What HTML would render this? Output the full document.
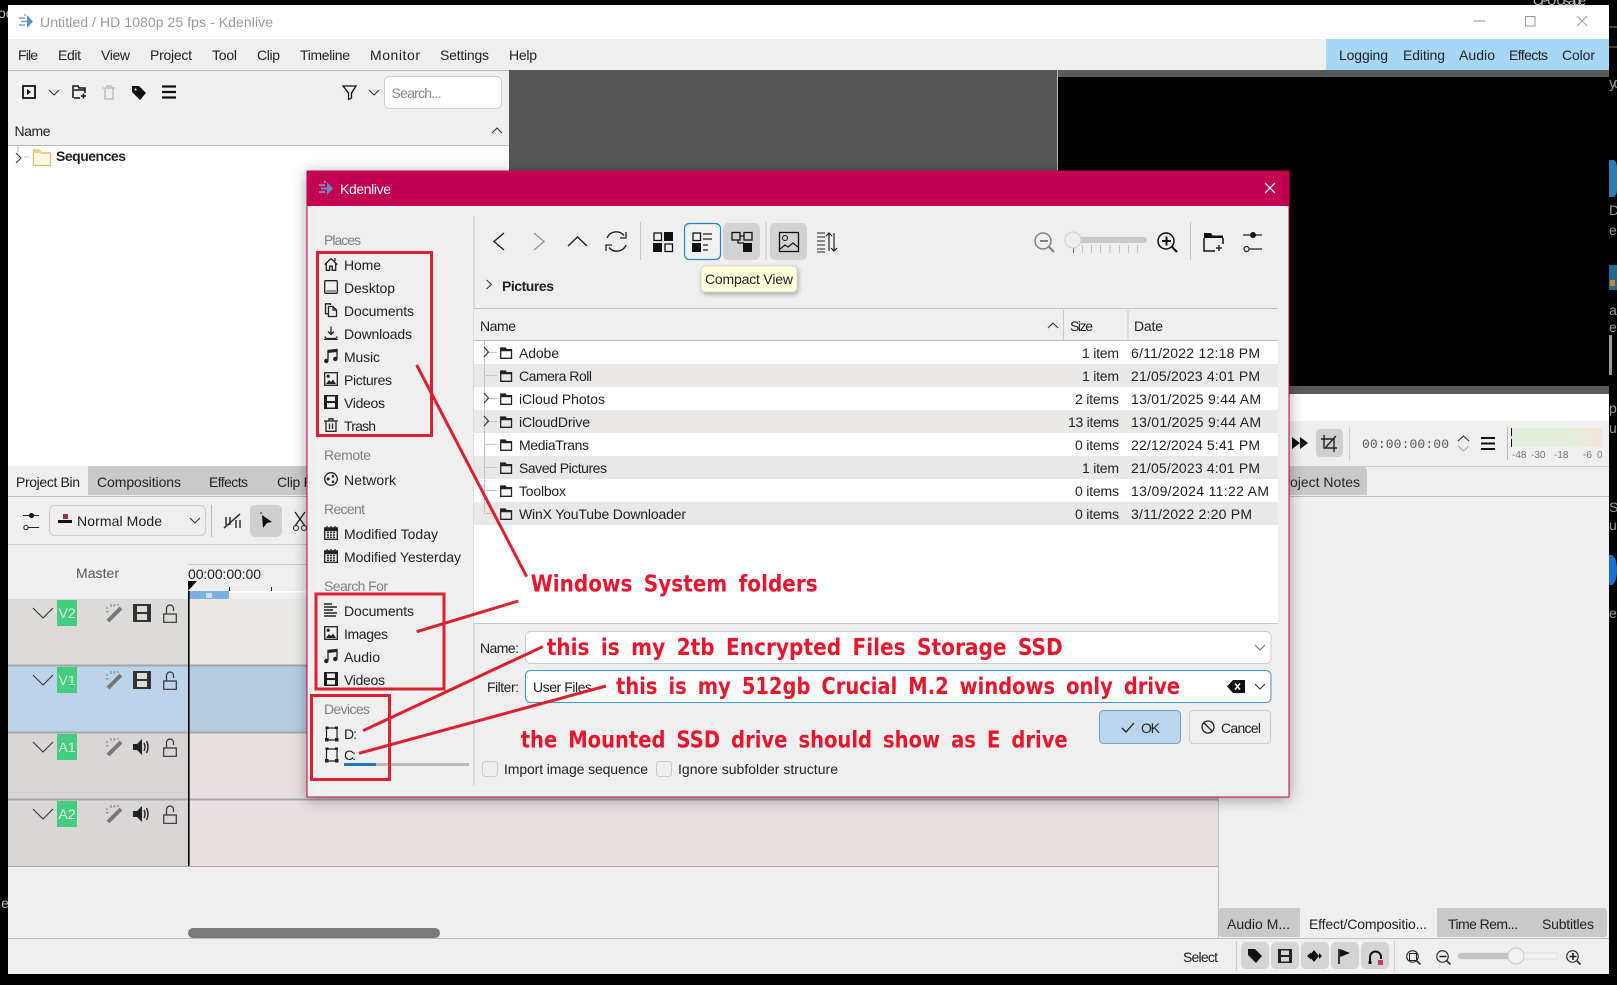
<!DOCTYPE html>
<html><head><meta charset="utf-8"><title>Kdenlive</title>
<style>
html,body{margin:0;padding:0;background:#000;overflow:hidden}
svg{display:block}
text{font-family:"Liberation Sans",sans-serif;font-size:14px;fill:#222}
.h{fill:#808080}
.ann{font-family:"DejaVu Sans",sans-serif;font-weight:bold;font-size:23px;fill:#e8152d;word-spacing:5px}
.ic{fill:none;stroke:#222;stroke-width:1.3}
.ch{fill:none;stroke:#333;stroke-width:1.1}
.blk{fill:none;stroke:#000;stroke-width:1.6}
</style></head>
<body>
<svg width="1617" height="985" viewBox="0 0 1617 985" xmlns="http://www.w3.org/2000/svg">
<defs>
<g id="fold"><path d="M.7 11.3V1h4.6l1 1.6h5.2v8.7z" fill="none" stroke="#222" stroke-width="1.3"/><path d="M.7 1h4.6l1 2h5.2v1.2H.7z" fill="#222"/></g>
<g id="home"><path class="ic" d="M7 1.5L.7 7.6M7 1.5l6.3 6.1M2.3 6.5v6.8h3.4V9.2h2.6v4.1h3.4V6.5M11 1v3"/></g>
<g id="desk"><rect class="ic" x=".7" y=".7" width="12.6" height="12.6" rx="1"/><rect x="2" y="10" width="10" height="2" fill="#999"/></g>
<g id="docs"><path class="ic" d="M6.5 2V.8H1.5v10h3M4.5 3.5h4.5l3.5 3.5v6.5h-8zM9 3.5V7h3.5"/></g>
<g id="dl"><path class="ic" d="M7 .5v8M4 5.5l3 3 3-3M.7 10.5l1.5 2h9.6l1.5-2"/><path d="M0 13.4h14" stroke="#222" stroke-width="1.2"/></g>
<g id="music"><path class="ic" d="M4 11.5V1.5l9-1v9"/><path d="M4 1.5l9-1v2.5l-9 1z" fill="#222"/><circle cx="2.3" cy="12" r="2.2" fill="#222"/><circle cx="11.3" cy="10" r="2.2" fill="#222"/></g>
<g id="pics"><rect class="ic" x=".7" y=".7" width="12.6" height="12.6"/><circle cx="4.2" cy="4.2" r="1.6" fill="#222"/><path d="M2 12l3-4 2 2 2-2.500 3 4.500z" fill="#222"/></g>
<g id="vids"><rect x="0" y="0" width="14" height="14" fill="#1c1c1c"/><rect x="3" y="1.500" width="8" height="4.500" fill="#efefef"/><rect x="3" y="8" width="8" height="4.500" fill="#efefef"/></g>
<g id="trash"><path class="ic" d="M2 3h10v10.300H2zM0 3h14M5 3V.8h4V3M5.500 5.500v5.500M8.500 5.500v5.500"/></g>
<g id="net"><circle class="ic" cx="7" cy="7" r="6.300"/><circle cx="4.200" cy="7" r="1.500" fill="#222"/><circle cx="9" cy="4.200" r="1.300" fill="#222"/><circle cx="9" cy="9.800" r="1.300" fill="#222"/></g>
<g id="cal"><rect class="ic" x=".7" y="2" width="12.600" height="11.300"/><path d="M.7 2h12.600v2.500H.7zM3 0v3M7 0v3M11 0v3" stroke="#222" stroke-width="1.200" fill="#222"/><path d="M3 6.500h2M6 6.500h2M9 6.500h2M3 9h2M6 9h2M9 9h2M3 11.300h2M6 11.300h2M9 11.300h2" stroke="#222" stroke-width="1.400"/></g>
<g id="docl"><path d="M0 1h8M0 4h13M0 7h9M0 10h13M0 13h12" stroke="#222" stroke-width="1.500"/></g>
<g id="drive"><rect fill="none" stroke="#222" stroke-width="1.200" x="1.500" y="1" width="10.500" height="12" rx="1"/><path d="M0 11h3.500v3.500H0zM10 11h3.500v3.500H10zM.5-.5h3v2.500h-3zM10 -.5h3V2h-3z" fill="#222"/></g>
<g id="wand"><path d="M3 17L16 4" stroke="#777" stroke-width="4"/><path d="M1.500 3l.8 2M6 0v3M10 0l-1.200 2.500M1 8l2.500-.5M13 0v2" stroke="#888" stroke-width="1.200"/></g>
<g id="film"><rect width="18" height="18" fill="#333"/><rect x="4" y="2" width="10" height="6" fill="#dcdbd8"/><rect x="4" y="10" width="10" height="6" fill="#dcdbd8"/></g>
<g id="lock"><path d="M.7 10h12.600v8.300H.7zM3.500 10V4.500a3.500 3.500 0 0 1 7 0V7" fill="none" stroke="#333" stroke-width="1.200"/></g>
<g id="spk"><path d="M0 6h4l5-5v16l-5-5H0z" fill="#222"/><path d="M11 5q2 4 0 8M13.500 3q3 6 0 12" fill="none" stroke="#222" stroke-width="1.400"/></g>
<g id="mag"><circle cx="9" cy="9" r="8" fill="none" stroke="currentColor" stroke-width="1.500"/><path d="M15 15l5 5" stroke="currentColor" stroke-width="2.200"/></g>
<g id="set"><path d="M0 3h19M2 17h17" stroke="#222" stroke-width="1.200"/><circle cx="10" cy="3" r="3" fill="#111"/><circle cx="3.500" cy="17" r="2.500" fill="#efefef" stroke="#222" stroke-width="1.200"/></g>
<g id="nf"><path d="M1 19V1h7l1.500 2.500H20V6H1z" fill="#111"/><path d="M1 6v13h11M20 6v6" fill="none" stroke="#111" stroke-width="1.500"/><path d="M13 16h6M16 13v6" stroke="#111" stroke-width="1.300"/></g>
<g id="chd"><path d="M0 0l5 5 5-5" class="ch"/></g>
<g id="kd"><path d="M0 4h6M2 7.500h6M0 11h6" stroke="#7aa2d8" stroke-width="1.600"/><path d="M8 1l6 6.500-6 6.500z" fill="#5a8fd0"/><circle cx="6" cy="1" r="1" fill="#d98"/></g>
</defs>

<!-- outside bg strays -->
<rect width="1617" height="985" fill="#000"/>
<text x="1533" y="5" style="font-size:13px;fill:#bbb" textLength="53">CPU Usage</text>
<text x="-2" y="18" style="fill:#bbb">oc</text>
<text x="-9" y="908" style="fill:#bbb">Re</text>
<g style="fill:#aaa">
<text x="1609" y="88" style="fill:#999;font-size:15px;letter-spacing:-3px">yc</text>
<text x="1609" y="215" style="fill:#999">Di</text>
<text x="1609" y="235" style="fill:#999">e</text>
<text x="1609" y="315" style="fill:#999">al</text>
<text x="1609" y="332" style="fill:#999">e.</text>
<text x="1609" y="413" style="fill:#999">pe</text>
<text x="1609" y="433" style="fill:#999">ut</text>
<text x="1609" y="512" style="fill:#999">Sp</text>
<text x="1609" y="530" style="fill:#999">ut</text>
<text x="1609" y="618" style="fill:#999">e</text>
</g>
<path d="M1609 27h8M1609 47h8" stroke="#a87a30"/>
<path d="M1609 160h5q3 2 3 8v22q0 5-3 7h-5z" fill="#2a7fb0"/>
<path d="M1609 265h8v25h-8z" fill="#1f6a8a"/><rect x="1610" y="280" width="5" height="6" fill="#c08a30"/>
<path d="M1609 555h3q5 3 5 15t-5 15h-3z" fill="#1c6fd0"/>
<rect x="1609" y="335" width="3" height="40" fill="#999"/>

<!-- window -->
<rect x="8" y="5" width="1601" height="969" fill="#efefef"/>
<rect x="8" y="5" width="1601" height="34" fill="#fff"/>
<use href="#kd" x="19" y="14"/>
<text x="40" y="27" style="fill:#999" textLength="233">Untitled / HD 1080p 25 fps - Kdenlive</text>
<path d="M1474 21h11" stroke="#999"/><rect x="1525.500" y="16.500" width="9.500" height="9.500" fill="none" stroke="#999"/><path d="M1577 16l10 10M1587 16l-10 10" stroke="#999"/>

<!-- menu -->
<rect x="8" y="70" width="1601" height="1" fill="#bbb"/>
<text x="18" y="60" textLength="20">File</text><text x="58" y="60" textLength="23">Edit</text><text x="101" y="60" textLength="29">View</text><text x="150" y="60" textLength="42">Project</text><text x="212" y="60" textLength="25">Tool</text><text x="257" y="60" textLength="23">Clip</text><text x="300" y="60" textLength="50">Timeline</text><text x="370" y="60" textLength="50">Monitor</text><text x="440" y="60" textLength="49">Settings</text><text x="509" y="60" textLength="28">Help</text>
<rect x="1326" y="39" width="283" height="31" fill="#a6d6f8"/>
<text x="1339" y="60" textLength="49">Logging</text><text x="1403" y="60" textLength="42">Editing</text><text x="1459" y="60" textLength="36">Audio</text><text x="1509" y="60" textLength="39">Effects</text><text x="1562" y="60" textLength="33">Color</text>

<!-- dark monitor areas -->
<rect x="509" y="70" width="548" height="400" fill="#565656"/>
<rect x="1057" y="70" width="1" height="110" fill="#bbb"/>
<rect x="1058" y="70" width="551" height="324" fill="#5a5a5a"/>
<rect x="1058" y="77" width="551" height="309" fill="#000"/>
<rect x="1058" y="394" width="551" height="27" fill="#fff"/>

<!-- bin panel -->
<rect x="8" y="71" width="501" height="75" fill="#efefef"/>
<rect x="8" y="146" width="501" height="320" fill="#fff"/>
<rect x="8" y="145" width="501" height="1" fill="#bbb"/>
<rect x="23" y="86" width="12" height="12" fill="none" stroke="#111" stroke-width="1.800"/><path d="M27 89l4 3-4 3z" fill="#111"/>
<use href="#chd" x="49" y="90"/>
<path d="M73 98V86h5l1 2h6v2H74M85 90v3M74 98h6M81 96h5M83.500 93.500v5" fill="none" stroke="#111" stroke-width="1.500"/>
<path d="M103 88h12M105 88v11h8V88M107 88v-2h4v2" fill="none" stroke="#bdbdbd" stroke-width="1.500"/>
<path d="M132 86h7l7 7-6 7-8-8z" fill="#111"/><circle cx="135.500" cy="89.500" r="1" fill="#fff"/>
<path d="M162 86.500h14M162 92h14M162 97.500h14" stroke="#111" stroke-width="2.200"/>
<path d="M343 86h13l-4.500 7v5l-3 1.500V93z" fill="none" stroke="#111" stroke-width="1.300"/>
<use href="#chd" x="369" y="90"/>
<rect x="384.500" y="76.500" width="117" height="32" rx="5" fill="#fff" stroke="#ccc"/>
<text x="391.500" y="98" style="fill:#888" textLength="50">Search...</text>
<text x="14.500" y="136" textLength="36">Name</text>
<path d="M492 133l5-5 5 5" class="ch"/>
<path d="M16 153l5 5-5 5" class="ch"/><path d="M24 157h5M18 146v6" stroke="#bbb"/>
<path d="M33.500 165.500V150h6l2 3h9v12.500z" fill="#fff9e6" stroke="#f0b860" stroke-width="1.200"/><path d="M33.500 153h17v-1h-9l-2-2h-6z" fill="#f7cf85"/>
<text x="56" y="161" style="font-weight:bold" textLength="70">Sequences</text>

<!-- tabs left -->
<rect x="88" y="466" width="225" height="29" fill="#c9c9c9"/>
<rect x="8" y="466" width="80" height="30" fill="#efefef"/>
<rect x="8" y="496" width="305" height="1" fill="#bbb"/>
<text x="16" y="487" textLength="64">Project Bin</text><text x="97" y="487" textLength="84">Compositions</text><text x="209" y="487" textLength="39">Effects</text><text x="277" y="487" textLength="36">Clip P</text>

<!-- timeline toolbar -->
<use href="#set" transform="translate(23 513) scale(.85 .85)"/>
<rect x="49.500" y="505.500" width="156" height="30" rx="5" fill="#efefef" stroke="#ccc"/>
<rect x="63" y="514" width="5" height="5" fill="#a03060"/><rect x="58" y="520" width="14" height="3" fill="#111"/>
<text x="77" y="526" textLength="85">Normal Mode</text>
<use href="#chd" x="190" y="518"/>
<rect x="211" y="505" width="1" height="32" fill="#bbb"/>
<path d="M224 528l16-14M226 517v8M230 517v8M236 520v8M240 520v8" stroke="#333" stroke-width="1.500"/>
<rect x="250" y="505" width="32" height="32" rx="5" fill="#cfcfcf"/>
<path d="M262 515l10 7-5 1-4 5z" fill="#111"/><circle cx="261" cy="513" r=".8" fill="#111"/>
<path d="M295 512l10 14M305 512l-10 14" stroke="#222" stroke-width="1.300"/><circle cx="296" cy="528" r="2.500" fill="none" stroke="#222"/><circle cx="304" cy="528" r="2.500" fill="none" stroke="#222"/>
<rect x="8" y="544" width="305" height="1" fill="#ccc"/>
<text x="76" y="578" style="fill:#555" textLength="43">Master</text>
<rect x="188" y="564" width="125" height="1" fill="#ccc"/>
<text x="188" y="579" textLength="73">00:00:00:00</text>

<!-- tracks -->
<rect x="8" y="599" width="180" height="67" fill="#dcdbd8"/><rect x="188" y="599" width="1030" height="67" fill="#e9e8e4"/>
<rect x="8" y="666" width="180" height="67" fill="#bcd4ea"/><rect x="188" y="666" width="1030" height="67" fill="#b5cde0"/>
<rect x="8" y="733" width="180" height="67" fill="#dad6d5"/><rect x="188" y="733" width="1030" height="67" fill="#e8e0e0"/>
<rect x="8" y="800" width="180" height="66" fill="#dad6d5"/><rect x="188" y="800" width="1030" height="66" fill="#e8e0e0"/>
<path d="M8 665.500h1210M8 732.500h1210M8 799.500h1210" stroke="#a3a5a7" stroke-width="2"/>
<path d="M8 866.500h1210" stroke="#aaa"/>
<rect x="1218" y="497" width="1" height="441" fill="#bbb"/>
<rect x="188" y="591" width="125" height="1.500" fill="#fff"/><rect x="189" y="591" width="40" height="8" fill="#7cb0e0"/><rect x="206" y="593" width="6" height="5" fill="#c9def0"/>
<path d="M229.500 587v4M271.500 587v4" stroke="#222"/>
<path d="M188 581h9l-9 10z" fill="#000"/>
<rect x="188" y="591" width="1.600" height="275" fill="#000"/>

<g id="hdrs">
<path d="M33 608l10 10 10-10" class="ch"/><rect x="57" y="600" width="20" height="26" fill="#45cd7f"/><text x="58.500" y="618" style="fill:#dff5e6;font-size:14px">V2</text><use href="#wand" x="105" y="604"/><use href="#film" x="133" y="604"/><use href="#lock" x="163" y="604"/>
<path d="M33 675l10 10 10-10" class="ch"/><rect x="57" y="667" width="20" height="26" fill="#45cd7f"/><text x="58.500" y="685" style="fill:#dff5e6;font-size:14px">V1</text><use href="#wand" x="105" y="671"/><use href="#film" x="133" y="671"/><use href="#lock" x="163" y="671"/>
<path d="M33 742l10 10 10-10" class="ch"/><rect x="57" y="734" width="20" height="26" fill="#45cd7f"/><text x="58.500" y="752" style="fill:#dff5e6;font-size:14px">A1</text><use href="#wand" x="105" y="738"/><use href="#spk" x="133" y="738"/><use href="#lock" x="163" y="738"/>
<path d="M33 809l10 10 10-10" class="ch"/><rect x="57" y="801" width="20" height="26" fill="#45cd7f"/><text x="58.500" y="819" style="fill:#dff5e6;font-size:14px">A2</text><use href="#wand" x="105" y="805"/><use href="#spk" x="133" y="805"/><use href="#lock" x="163" y="805"/>
</g>

<!-- scrollbar -->
<rect x="188" y="928" width="252" height="10" rx="5" fill="#7a7a7a"/>
<rect x="8" y="938" width="1601" height="1" fill="#bbb"/>

<!-- monitor controls right -->
<rect x="1219" y="421" width="390" height="76" fill="#efefef"/>
<path d="M1292 437l8 6-8 6zM1300 437l8 6-8 6z" fill="#111"/>
<rect x="1316" y="429" width="27" height="28" rx="4" fill="#cfcfcf"/>
<path d="M1324 435v13h13M1321 439h13v13M1336 436l-10 11" fill="none" stroke="#222" stroke-width="1.400"/>
<rect x="1349" y="427" width="1" height="33" fill="#ccc"/>
<text x="1362" y="448" style="fill:#555;font-family:'Liberation Mono',monospace;font-size:13px" textLength="87">00:00:00:00</text>
<path d="M1458 441l5.500-5 5.500 5" class="ch"/><path d="M1458 446l5.500 5 5.500-5" class="ch" style="stroke:#aaa"/>
<path d="M1481 438h14M1481 443.500h14M1481 449h14" stroke="#111" stroke-width="2"/>
<rect x="1507" y="427" width="1" height="33" fill="#bbb"/>
<defs><linearGradient id="mt" x1="0" x2="1" y1="0" y2="0"><stop offset="0" stop-color="#e2efdf"/><stop offset=".7" stop-color="#e6eedd"/><stop offset=".85" stop-color="#efeadc"/><stop offset="1" stop-color="#f3e3de"/></linearGradient></defs>
<rect x="1511" y="428" width="91" height="19" fill="url(#mt)"/>
<path d="M1511.500 428v8M1511.500 439v8" stroke="#111"/>
<g style="font-size:10px"><text x="1512" y="458" style="fill:#777;font-size:10px">-48</text><text x="1531" y="458" style="fill:#777;font-size:10px">-30</text><text x="1554" y="458" style="fill:#777;font-size:10px">-18</text><text x="1583" y="458" style="fill:#777;font-size:10px">-6</text><text x="1597" y="458" style="fill:#777;font-size:10px">0</text></g>
<rect x="1219" y="466" width="390" height="1" fill="#ccc"/>
<path d="M1270 467h93q4 0 4 4v24h-97z" fill="#c9c9c9"/>
<text x="1276" y="487" textLength="84">Project Notes</text>
<rect x="1219" y="496" width="390" height="1" fill="#bbb"/>

<!-- bottom tabs -->
<rect x="1219" y="908" width="388" height="29" rx="3" fill="#c9c9c9"/>
<rect x="1300" y="908" width="137" height="30" fill="#efefef"/>
<text x="1227" y="929" textLength="63">Audio M...</text><text x="1309" y="929" textLength="118">Effect/Compositio...</text><text x="1448" y="929" textLength="70">Time Rem...</text><text x="1542" y="929" textLength="52">Subtitles</text>

<!-- status bar -->
<text x="1183" y="962" textLength="35">Select</text>
<rect x="1236" y="941" width="1" height="30" fill="#ccc"/>
<rect x="1241" y="942" width="28" height="27" rx="5" fill="#d4d4d4"/><rect x="1271" y="942" width="28" height="27" rx="5" fill="#d4d4d4"/><rect x="1301" y="942" width="28" height="27" rx="5" fill="#d4d4d4"/><rect x="1331" y="942" width="28" height="27" rx="5" fill="#d4d4d4"/><rect x="1361" y="942" width="28" height="27" rx="5" fill="#d4d4d4"/>
<path d="M1248 949h7l7 7-6 7-8-8z" fill="#111"/>
<rect x="1278" y="949" width="14" height="14" fill="#222"/><rect x="1281" y="950.500" width="8" height="4.500" fill="#d4d4d4"/><rect x="1281" y="957" width="8" height="4.500" fill="#d4d4d4"/>
<path d="M1307 956l4-3.500 0 7zM1314 950l5 6-5 6-5-6zM1322 956l-3-3v6z" fill="#111"/>
<path d="M1339 949v15" stroke="#111" stroke-width="1.600"/><path d="M1340 949l10 4-10 4z" fill="#111"/>
<path d="M1370 962v-5a5.500 5.500 0 0 1 11 0v2" fill="none" stroke="#111" stroke-width="2"/><rect x="1368.500" y="961" width="3" height="3" fill="#111"/><rect x="1378" y="960" width="5" height="5" fill="#c23b6f"/>
<rect x="1394" y="941" width="1" height="30" fill="#ccc"/>
<g color="#222"><use href="#mag" transform="translate(1406 950) scale(.72)"/><use href="#mag" transform="translate(1436 950) scale(.72)"/><use href="#mag" transform="translate(1566 950) scale(.72)"/></g>
<rect x="1409.500" y="953.500" width="7" height="7" fill="none" stroke="#222"/>
<path d="M1439.500 956.500h7" stroke="#222" stroke-width="1.600"/>
<path d="M1569.500 956.500h7M1573 953v7" stroke="#222" stroke-width="1.600"/>
<rect x="1458" y="953" width="100" height="6" rx="3" fill="#f3f3f3" stroke="#ddd"/>
<rect x="1458" y="953" width="58" height="6" rx="3" fill="#c4c4c4"/>
<circle cx="1516" cy="956" r="8" fill="#f2f2f2" stroke="#c8c8c8"/>

<!-- DIALOG -->
<rect x="307" y="171" width="982" height="626" fill="#efefef" stroke="#c1004f" stroke-width="1" style="filter:drop-shadow(0 2px 7px rgba(0,0,0,.35))"/>
<rect x="307" y="171" width="982" height="35" fill="#c1004f"/>
<use href="#kd" x="319" y="181"/>
<text x="340" y="194" style="fill:#fff" textLength="51">Kdenlive</text>
<path d="M1265 183l10 10M1275 183l-10 10" stroke="#fff" stroke-width="1.300"/>
<rect x="473.500" y="216" width="1" height="569" fill="#c8c8c8"/>

<!-- sidebar -->
<text class="h" x="324" y="245" textLength="37">Places</text>
<use href="#home" x="324" y="257"/><text x="344" y="270" textLength="37">Home</text>
<use href="#desk" x="324" y="280"/><text x="344" y="293" textLength="51">Desktop</text>
<use href="#docs" x="324" y="303"/><text x="344" y="316" textLength="70">Documents</text>
<use href="#dl" x="324" y="326"/><text x="344" y="339" textLength="68">Downloads</text>
<use href="#music" x="324" y="349"/><text x="344" y="362" textLength="36">Music</text>
<use href="#pics" x="324" y="372"/><text x="344" y="385" textLength="48">Pictures</text>
<use href="#vids" x="324" y="395"/><text x="344" y="408" textLength="41">Videos</text>
<use href="#trash" x="324" y="418"/><text x="344" y="431" textLength="32">Trash</text>
<text class="h" x="324" y="460" textLength="47">Remote</text>
<use href="#net" x="324" y="472"/><text x="344" y="485" textLength="52">Network</text>
<text class="h" x="324" y="514" textLength="41">Recent</text>
<use href="#cal" x="324" y="526"/><text x="344" y="539" textLength="94">Modified Today</text>
<use href="#cal" x="324" y="549"/><text x="344" y="562" textLength="117">Modified Yesterday</text>
<text class="h" x="324" y="591" textLength="64">Search For</text>
<use href="#docl" x="324" y="603"/><text x="344" y="616" textLength="70">Documents</text>
<use href="#pics" x="324" y="626"/><text x="344" y="639" textLength="44">Images</text>
<use href="#music" x="324" y="649"/><text x="344" y="662" textLength="36">Audio</text>
<use href="#vids" x="324" y="672"/><text x="344" y="685" textLength="41">Videos</text>
<text class="h" x="324" y="714" textLength="46">Devices</text>
<use href="#drive" x="325" y="727"/><text x="344" y="739" textLength="13">D:</text>
<use href="#drive" x="325" y="748"/><text x="344" y="760" textLength="12">C:</text>
<rect x="344" y="763" width="125" height="3" fill="#bbb"/><rect x="344" y="763" width="32" height="3" fill="#1a78c8"/>

<!-- toolbar -->
<path d="M504 233l-10 8.500 10 8.500" fill="none" stroke="#222" stroke-width="1.400"/>
<path d="M534 233l10 8.500-10 8.500" fill="none" stroke="#999" stroke-width="1.400"/>
<path d="M568 246l9.500-9 9.500 9" fill="none" stroke="#222" stroke-width="1.400"/>
<path d="M607 238a10 10 0 0 1 17-2.500M626 245a10 10 0 0 1-17 2.500" fill="none" stroke="#222" stroke-width="1.400"/><path d="M626 232v6h-6M606 251v-6h6" fill="none" stroke="#222" stroke-width="1.300"/>
<rect x="640" y="222" width="1" height="38" fill="#c8c8c8"/>
<rect x="654" y="233" width="7.500" height="7.500" fill="none" stroke="#111" stroke-width="1.300"/><rect x="664" y="232" width="9" height="9" fill="#111"/><rect x="653" y="243" width="9" height="9" fill="#111"/><rect x="665" y="244" width="7.500" height="7.500" fill="none" stroke="#111" stroke-width="1.300"/>
<rect x="684.500" y="223.500" width="36" height="36" rx="5" fill="#f1f1f1" stroke="#2a82c8" stroke-width="1.200"/>
<rect x="693" y="233" width="7.500" height="7.500" fill="none" stroke="#111" stroke-width="1.300"/><rect x="692" y="243" width="9" height="9" fill="#111"/><path d="M703 234h9M703 239h9M703 245h5M703 250h5" stroke="#222" stroke-width="1.200"/>
<rect x="723" y="223" width="37" height="37" rx="5" fill="#d2d2d2"/>
<rect x="732" y="232.500" width="8" height="7.500" fill="none" stroke="#111" stroke-width="1.300"/><rect x="744" y="232.500" width="8" height="7.500" fill="none" stroke="#111" stroke-width="1.300"/><rect x="743" y="243" width="9" height="9" fill="#111"/><path d="M738 240v3h6M740 236h4" stroke="#111" stroke-width="1.200" fill="none"/>
<rect x="765.500" y="222" width="1" height="38" fill="#c8c8c8"/>
<rect x="770" y="223" width="37" height="37" rx="5" fill="#d2d2d2"/>
<rect x="779.500" y="232.500" width="19" height="19" fill="none" stroke="#111" stroke-width="1.300"/><circle cx="785" cy="238" r="2.500" fill="none" stroke="#111"/><path d="M780 249l5-4 3 2 5-4 5 4" fill="none" stroke="#111" stroke-width="1.200"/>
<path d="M817 233h8M817 237h8M817 241h8M817 245h8M817 249h8M817 252h8" stroke="#222" stroke-width="1.100"/><path d="M829 251v-18M826 236l3-3 3 3M834 233v18M831 248l3 3 3-3" fill="none" stroke="#222" stroke-width="1.200"/>
<g color="#808080"><use href="#mag" x="1034" y="232"/></g>
<path d="M1040 241h8" stroke="#808080" stroke-width="2"/>
<rect x="1079" y="237" width="68" height="6" rx="3" fill="#c8c8c8"/>
<path d="M1082.500 245v8M1091.500 245v8M1100.500 245v8M1110 245v8M1119.500 245v8M1128.500 245v8M1137.500 245v8" stroke="#c4c4c4"/>
<path d="M1073.500 248v5" stroke="#c03050"/>
<circle cx="1073" cy="240" r="8" fill="#eeeeee" stroke="#cfcfcf"/>
<g color="#111"><use href="#mag" x="1157" y="232"/></g>
<path d="M1162 241h9M1166.500 236.500v9" stroke="#111" stroke-width="2"/>
<rect x="1190" y="222" width="1" height="38" fill="#c8c8c8"/>
<use href="#nf" x="1203" y="232"/>
<use href="#set" x="1243" y="232"/>

<!-- path -->
<path d="M486.500 280l5 4.500-5 4.500" class="ch"/>
<text x="502" y="291" style="font-weight:bold" textLength="52">Pictures</text>

<!-- file view -->
<rect x="474" y="308" width="804" height="1" fill="#c4c4c4"/>
<rect x="474" y="309" width="804" height="32" fill="#efefef"/>
<rect x="474" y="340" width="804" height="1" fill="#bbb"/>
<text x="480" y="331" textLength="36">Name</text>
<path d="M1048 328l5-5 5 5" class="ch"/>
<rect x="1063" y="310" width="1" height="30" fill="#c8c8c8"/><rect x="1127.500" y="310" width="1" height="30" fill="#c8c8c8"/>
<text x="1070" y="331" textLength="23">Size</text><text x="1134" y="331" textLength="29">Date</text>
<rect x="474" y="341" width="804" height="282" fill="#fff"/>
<rect x="474" y="364" width="804" height="23" fill="#e9e8e6"/><rect x="474" y="410" width="804" height="23" fill="#e9e8e6"/><rect x="474" y="456" width="804" height="23" fill="#e9e8e6"/><rect x="474" y="502" width="804" height="23" fill="#e9e8e6"/>
<path d="M484.500 341v173M486 352.500h11M486 375.500h11M486 398.500h11M486 421.500h11M486 444.500h11M486 467.500h11M486 490.500h11M486 513.500h11" stroke="#c4c4c4"/>
<path d="M484 347l4.500 5-4.500 5M484 393l4.500 5-4.500 5M484 416l4.500 5-4.500 5" class="ch"/>
<use href="#fold" x="500" y="347"/><use href="#fold" x="500" y="370"/><use href="#fold" x="500" y="393"/><use href="#fold" x="500" y="416"/><use href="#fold" x="500" y="439"/><use href="#fold" x="500" y="462"/><use href="#fold" x="500" y="485"/><use href="#fold" x="500" y="508"/>
<text x="519" y="358" textLength="40">Adobe</text><text x="519" y="381" textLength="73">Camera Roll</text><text x="519" y="404" textLength="86">iCloud Photos</text><text x="519" y="427" textLength="71">iCloudDrive</text><text x="519" y="450" textLength="70">MediaTrans</text><text x="519" y="473" textLength="88">Saved Pictures</text><text x="519" y="496" textLength="47">Toolbox</text><text x="519" y="519" textLength="167">WinX YouTube Downloader</text>
<text x="1082" y="358" textLength="37">1 item</text><text x="1082" y="381" textLength="37">1 item</text><text x="1075" y="404" textLength="44">2 items</text><text x="1068" y="427" textLength="51">13 items</text><text x="1075" y="450" textLength="44">0 items</text><text x="1082" y="473" textLength="37">1 item</text><text x="1075" y="496" textLength="44">0 items</text><text x="1075" y="519" textLength="44">0 items</text>
<text x="1131" y="358" textLength="129">6/11/2022 12:18 PM</text><text x="1131" y="381" textLength="129">21/05/2023 4:01 PM</text><text x="1131" y="404" textLength="130">13/01/2025 9:44 AM</text><text x="1131" y="427" textLength="130">13/01/2025 9:44 AM</text><text x="1131" y="450" textLength="129">22/12/2024 5:41 PM</text><text x="1131" y="473" textLength="129">21/05/2023 4:01 PM</text><text x="1131" y="496" textLength="138">13/09/2024 11:22 AM</text><text x="1131" y="519" textLength="121">3/11/2022 2:20 PM</text>
<rect x="474" y="623" width="804" height="1" fill="#c8c8c8"/>

<!-- tooltip -->
<rect x="701" y="266" width="96" height="26" rx="4" fill="#ffffdc" stroke="#d8d8c0" style="filter:drop-shadow(1px 2px 2px rgba(0,0,0,.3))"/>
<text x="705" y="284" textLength="88">Compact View</text>

<!-- form -->
<text x="480" y="653" textLength="39">Name:</text>
<rect x="525.500" y="631.500" width="745.500" height="32" rx="5" fill="#fff" stroke="#ccc"/>
<path d="M1255 645l5 5 5-5" class="ch" style="stroke:#777"/>
<text x="487" y="692" textLength="32">Filter:</text>
<rect x="525.500" y="670.500" width="745.500" height="32" rx="5" fill="#fff" stroke="#3d9ad4"/>
<text x="533" y="692" textLength="59">User Files</text>
<path d="M1227 686.500l6-6.500h12v13h-12z" fill="#111"/><path d="M1235 683.500l5 6M1240 683.500l-5 6" stroke="#fff" stroke-width="1.500"/>
<path d="M1255 684l5 5 5-5" class="ch"/>
<rect x="1099.500" y="710.500" width="81" height="33" rx="4" fill="#bad5ec" stroke="#6ea3cc"/>
<path d="M1122 728l4 4 8-9" fill="none" stroke="#222" stroke-width="1.300"/>
<text x="1141" y="733" textLength="19">OK</text>
<rect x="1189.500" y="710.500" width="81" height="33" rx="4" fill="#efefef" stroke="#ccc"/>
<circle cx="1208" cy="727" r="6" fill="none" stroke="#222" stroke-width="1.300"/><path d="M1204 723l8 8" stroke="#222" stroke-width="1.300"/>
<text x="1221" y="733" textLength="40">Cancel</text>
<rect x="482.500" y="761.500" width="15" height="15" rx="3" fill="#efefef" stroke="#ccc"/>
<text x="504" y="774" textLength="144">Import image sequence</text>
<rect x="656.500" y="761.500" width="15" height="15" rx="3" fill="#efefef" stroke="#ccc"/>
<text x="678" y="774" textLength="160">Ignore subfolder structure</text>

<!-- annotations -->
<g fill="none" stroke="#dc2030" stroke-width="3">
<rect x="317.500" y="252.500" width="114" height="183"/>
<rect x="316" y="594" width="128" height="95"/>
<rect x="311.500" y="695.500" width="78" height="84"/>
<path d="M416.700 365L526.700 576.700M416.700 631.700L518.300 601M363 730.700L542.700 646.700M359 753.300L606 686"/>
</g>
<text class="ann" x="530.700" y="591.700" textLength="287" lengthAdjust="spacingAndGlyphs">Windows System folders</text>
<text class="ann" x="546.700" y="655" textLength="516" lengthAdjust="spacingAndGlyphs">this is my 2tb Encrypted Files Storage SSD</text>
<text class="ann" x="616" y="694" textLength="564" lengthAdjust="spacingAndGlyphs">this is my 512gb Crucial M.2 windows only drive</text>
<text class="ann" x="520.700" y="747.700" textLength="547" lengthAdjust="spacingAndGlyphs">the Mounted SSD drive should show as E drive</text>
</svg>
</body></html>
